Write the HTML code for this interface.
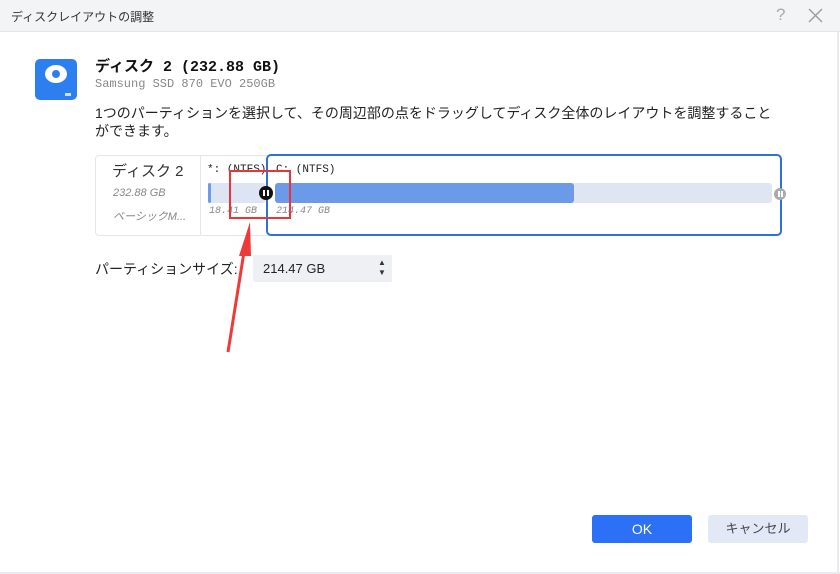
<!DOCTYPE html>
<html><head><meta charset="utf-8"><style>
body{margin:0;width:840px;height:574px;background:#fff;position:relative;overflow:hidden;font-family:"Liberation Sans","Noto Sans CJK JP",sans-serif;color:#222}
.a{position:absolute}
.mono{font-family:"Liberation Mono","Noto Sans CJK JP",monospace}
</style></head><body>
<div class="a" style="left:0;top:0;width:840px;height:31px;background:#f3f4f6;border-bottom:1px solid #e4e6ea"></div>
<div class="a" style="left:11px;top:8px;font-size:12px;color:#333">ディスクレイアウトの調整</div>
<div class="a" style="left:776px;top:5px;font-size:17px;color:#aaa">?</div>
<svg class="a" style="left:808px;top:8px" width="15" height="15"><path d="M1 1L14 14M14 1L1 14" stroke="#999" stroke-width="1.3"/></svg>
<div class="a" style="left:837px;top:32px;width:2px;height:542px;background:#e8eaee"></div>
<div class="a" style="left:0;top:572px;width:840px;height:2px;background:#e8eaee"></div>
<!-- disk icon -->
<div class="a" style="left:35px;top:59px;width:42px;height:41px;background:#2d7ff0;border-radius:5px"></div>
<div class="a" style="left:45px;top:65px;width:22px;height:18px;border-radius:50%;background:#fff"></div>
<div class="a" style="left:52px;top:70px;width:8px;height:8px;border-radius:50%;background:#2d7ff0"></div>
<div class="a" style="left:65px;top:93px;width:6px;height:3px;background:#cfe2ff"></div>
<div class="a mono" style="left:95px;top:55px;font-size:15px;font-weight:bold;color:#111">ディスク 2 (232.88 GB)</div>
<div class="a mono" style="left:95px;top:77px;font-size:12px;color:#888">Samsung SSD 870 EVO 250GB</div>
<div class="a" style="left:95px;top:104px;font-size:14px;line-height:18px;color:#222;width:690px">1つのパーティションを選択して、その周辺部の点をドラッグしてディスク全体のレイアウトを調整すること<br>ができます。</div>
<!-- disk panel -->
<div class="a" style="left:95px;top:155px;width:685px;height:79px;border:1px solid #e4e6ea;border-radius:4px"></div>
<div class="a" style="left:200px;top:156px;width:1px;height:79px;background:#e4e6ea"></div>
<div class="a" style="left:112px;top:160px;font-size:15px;color:#333">ディスク 2</div>
<div class="a" style="left:113px;top:187px;font-size:11px;color:#888;font-style:italic">232.88 GB</div>
<div class="a" style="left:113px;top:208px;font-size:11px;color:#888;font-style:italic">ベーシックM...</div>
<div class="a mono" style="left:207px;top:164px;font-size:11px;color:#222">*: (NTFS)</div>
<div class="a" style="left:208px;top:183px;width:58px;height:20px;background:#dde5f4;border-radius:3px"></div>
<div class="a" style="left:208px;top:183px;width:3px;height:20px;background:#6d9be8;border-radius:2px"></div>
<div class="a mono" style="left:209px;top:206px;font-size:10px;color:#888;font-style:italic">18.41 GB</div>
<div class="a" style="left:266px;top:154px;width:512px;height:78px;border:2px solid #2f6fde;border-radius:5px;background:#fff"></div>
<div class="a mono" style="left:276px;top:164px;font-size:11px;color:#222">C: (NTFS)</div>
<div class="a" style="left:275px;top:183px;width:497px;height:20px;background:#dfe5f3;border-radius:3px"></div>
<div class="a" style="left:275px;top:183px;width:299px;height:20px;background:#6b9ae8;border-radius:3px"></div>
<div class="a mono" style="left:276px;top:206px;font-size:10px;color:#888;font-style:italic">214.47 GB</div>
<div class="a" style="left:259px;top:186px;width:14px;height:14px;border-radius:50%;background:#111"></div>
<div class="a" style="left:263px;top:190px;width:2px;height:6px;background:#fff"></div>
<div class="a" style="left:267px;top:190px;width:2px;height:6px;background:#fff"></div>
<div class="a" style="left:774px;top:188px;width:12px;height:12px;border-radius:50%;background:#aaa"></div>
<div class="a" style="left:778px;top:191px;width:1.5px;height:6px;background:#fff"></div>
<div class="a" style="left:781px;top:191px;width:1.5px;height:6px;background:#fff"></div>
<!-- red box & arrow -->
<div class="a" style="left:229px;top:170px;width:58px;height:45px;border:2px solid #e8343a"></div>
<svg class="a" style="left:0;top:0" width="840" height="574"><path d="M228 352 L244 252" stroke="#ee3a3a" stroke-width="3"/><path d="M250 222 L239 256 L251 256 Z" fill="#ee3a3a"/></svg>
<!-- size -->
<div class="a" style="left:95px;top:259px;font-size:14px;color:#222">パーティションサイズ:</div>
<div class="a" style="left:253px;top:255px;width:139px;height:27px;background:#eef0f4"></div>
<div class="a" style="left:263px;top:261px;font-size:13px;color:#222">214.47 GB</div>
<div class="a" style="left:378px;top:258px;font-size:8px;color:#333;line-height:10px">▲<br>▼</div>
<!-- buttons -->
<div class="a" style="left:592px;top:515px;width:100px;height:28px;background:#2b70f5;border-radius:3px;color:#fff;font-size:14px;text-align:center;line-height:28px">OK</div>
<div class="a" style="left:708px;top:515px;width:100px;height:28px;background:#e2e8f6;border-radius:3px;color:#445;font-size:13px;text-align:center;line-height:28px">キャンセル</div>
</body></html>
